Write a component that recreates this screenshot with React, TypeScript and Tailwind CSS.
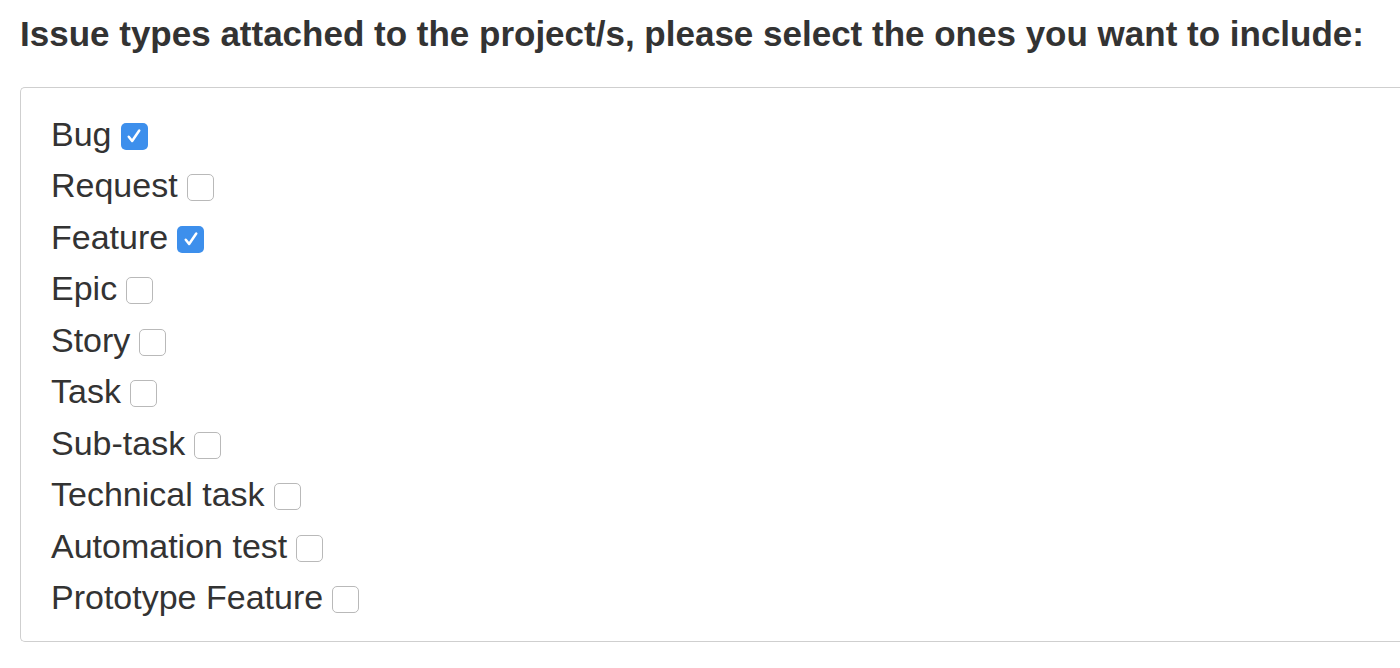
const ISSUE_TYPES = [
  { label: 'Bug', checked: true },
  { label: 'Request', checked: false },
  { label: 'Feature', checked: true },
  { label: 'Epic', checked: false },
  { label: 'Story', checked: false },
  { label: 'Task', checked: false },
  { label: 'Sub-task', checked: false },
  { label: 'Technical task', checked: false },
  { label: 'Automation test', checked: false },
  { label: 'Prototype Feature', checked: false },
];

function Checkbox({ checked }: { checked: boolean }) {
  if (checked) {
    return (
      <span className="ml-[9px] mt-[5px] flex h-[27px] w-[27px] items-center justify-center rounded-[5px] bg-[#3d8fec]">
        <svg width="20" height="20" viewBox="0 0 16 16" fill="none">
          <path d="M3.8 8.6l2.7 3.4L12.2 3.6" stroke="white" strokeWidth="2" strokeLinecap="round" strokeLinejoin="round" />
        </svg>
      </span>
    );
  }
  return <span className="ml-[9px] mt-[5px] h-[27px] w-[27px] rounded-[5px] border border-[#b9b9b9] bg-white" />;
}

export default function App() {
  return (
    <div className="min-h-screen bg-white pl-5 pt-[14px] text-[#333] [font-family:'Liberation_Sans',Arial,sans-serif]">
      <h1 className="whitespace-nowrap text-[35px] font-bold leading-[40px]">
        Issue types attached to the project/s, please select the ones you want to include:
      </h1>
      <div className="mt-[33px] h-[555px] rounded-l-[5px] border-y border-l border-[#cfcfcf] pl-[30px] pt-[20px]">
        {ISSUE_TYPES.map((item) => (
          <label key={item.label} className="flex h-[51.5px] items-center text-[34px] leading-none">
            <span>{item.label}</span>
            <Checkbox checked={item.checked} />
          </label>
        ))}
      </div>
    </div>
  );
}
